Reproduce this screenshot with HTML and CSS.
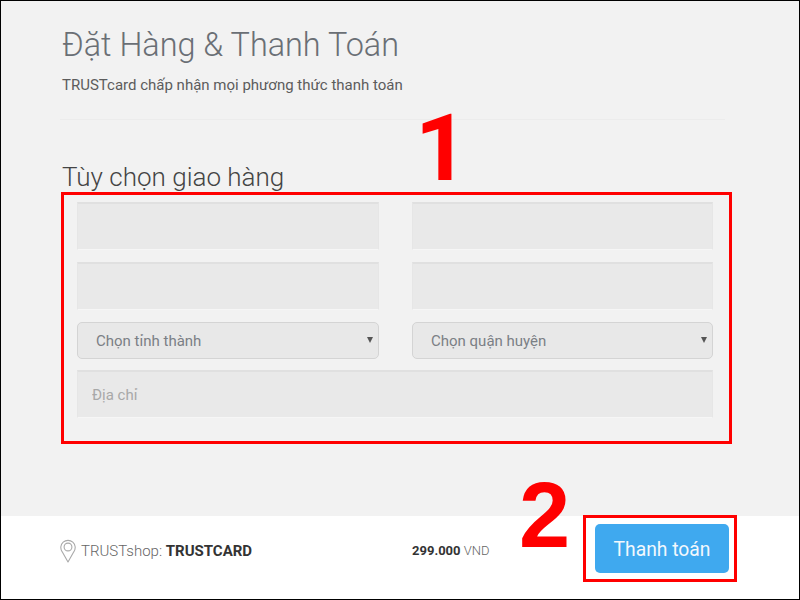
FILE: index.html
```html
<!DOCTYPE html>
<html lang="vi">
<head>
<meta charset="utf-8">
<title>Đặt Hàng &amp; Thanh Toán</title>
<link rel="stylesheet" href="styles.css">
</head>
<body>
<div class="page">
  <main class="main">
    <h1 class="title">Đặt Hàng &amp; Thanh Toán</h1>
    <p class="subtitle">TRUSTcard chấp nhận mọi phương thức thanh toán</p>
    <hr class="rule">
    <h2 class="section">Tùy chọn giao hàng</h2>
    <span class="mark mark-one">1</span>
    <form class="form">
      <input class="field" type="text" aria-label="Họ">
      <input class="field" type="text" aria-label="Tên">
      <input class="field" type="text" aria-label="Email">
      <input class="field" type="text" aria-label="Số điện thoại">
      <div class="select-wrap"><select class="select"><option>Chọn tỉnh thành</option></select></div>
      <div class="select-wrap"><select class="select"><option>Chọn quận huyện</option></select></div>
      <input class="field field-wide" type="text" placeholder="Địa chỉ">
    </form>
  </main>
  <footer class="footer">
    <div class="shop">
      <svg class="pin" viewBox="0 0 16 24" width="16" height="24" aria-hidden="true">
        <path d="M8 23 L2.2 12.8 A7.2 7.2 0 1 1 13.8 12.8 Z" fill="none" stroke="#a9a9a9" stroke-width="1.1" stroke-linejoin="round"/>
        <circle cx="8" cy="8" r="3.9" fill="none" stroke="#a9a9a9" stroke-width="1.1"/>
      </svg>
      <span class="shop-name">TRUSTshop: <b class="shop-brand">TRUSTCARD</b></span>
    </div>
    <div class="price"><b class="price-num">299.000</b> VND</div>
    <span class="mark mark-two">2</span>
    <div class="pay-frame"><button class="pay" type="button">Thanh toán</button></div>
  </footer>
</div>
</body>
</html>
```
FILE: styles.css
```css
* { box-sizing: border-box; }
html, body { margin: 0; padding: 0; }
body { font-family: Roboto, "Liberation Sans", sans-serif; }

.page {
  position: relative;
  width: 800px;
  height: 600px;
  border: 1px solid #000;
  display: flex;
  flex-direction: column;
  background: #fff;
  overflow: hidden;
}

.main {
  position: relative;
  height: 515px;
  flex: none;
  background: #f2f2f2;
  padding: 25px 0 0 61px;
}

.title {
  margin: 0;
  font-size: 32.4px;
  line-height: 38px;
  font-weight: 300;
  color: #6a6f75;
}
.subtitle {
  margin: 12px 0 0;
  font-size: 15px;
  line-height: 18px;
  font-weight: 400;
  color: #5c5c5c;
}
.rule {
  width: 665px;
  margin: 25px 0 0 -2px;
  border: 0;
  border-top: 1px solid #ececec;
}
.section {
  margin: 42px 0 0;
  font-size: 26px;
  line-height: 30px;
  font-weight: 300;
  color: #444;
}

.mark {
  position: absolute;
  font-family: "Liberation Sans", Arial, sans-serif;
  font-weight: 700;
  color: #f00;
  line-height: 1;
}
.mark-one { left: 414px; top: 101px; font-family: Roboto, sans-serif; font-size: 93px; font-weight: 700; }
.mark-two { left: 518px; top: -47px; font-size: 92px; }

.form {
  width: 671px;
  height: 252px;
  margin: 0 0 0 -1px;
  border: 3px solid #f00;
  padding: 7px 16px 0 13px;
  display: grid;
  grid-template-columns: 302px 301px;
  column-gap: 33px;
  grid-template-rows: 48px 48px 37px 48px;
  row-gap: 12px;
  align-content: start;
}
.field {
  display: block;
  width: 100%;
  height: 100%;
  margin: 0;
  border: 1px solid #e6e6e6;
  border-top: 2px solid #e0e0e0;
  border-bottom: 1px solid #f6f6f6;
  background: #e9e9e9;
  padding: 0 14px;
  font-family: inherit;
  font-size: 15px;
  color: #555;
  outline: none;
}
.field::placeholder { color: #a8a8a8; opacity: 1; }
.field-wide { grid-column: 1 / -1; height: 48px; margin-top: -1px; }

.select-wrap { position: relative; }
.select-wrap::after {
  content: "";
  position: absolute;
  right: 6px;
  top: 15px;
  border-left: 3px solid transparent;
  border-right: 3px solid transparent;
  border-top: 6px solid #555;
}
.select {
  display: block;
  width: 100%;
  height: 100%;
  margin: 0;
  appearance: none;
  border: 1px solid #d4d4d4;
  border-radius: 5px;
  background: #e8e8e8;
  padding: 0 18px;
  font-family: inherit;
  font-size: 15px;
  color: #7b7f85;
  outline: none;
}

.footer {
  position: relative;
  flex: 1;
  display: flex;
  align-items: center;
  padding: 0 0 14px 59px;
}
.shop {
  display: flex;
  align-items: center;
  gap: 5px;
  width: 352px;
  padding-top: 1px;
}
.pin { flex: none; }
.shop-name {
  font-size: 15px;
  font-weight: 300;
  color: #666;
}
.shop-brand { font-weight: 700; color: #333; }
.price {
  width: 171px;
  font-size: 13px;
  font-weight: 300;
  color: #666;
}
.price-num { font-weight: 700; color: #333; }
.pay-frame {
  width: 154px;
  height: 67px;
  margin-top: -1px;
  border: 3px solid #f00;
  padding: 6px 0 0 9px;
  align-self: flex-start;
}
.pay {
  display: block;
  width: 134px;
  height: 49px;
  border: 0;
  border-radius: 5px;
  background: #3fa9ef;
  color: #f2f8fd;
  padding: 1px 0 0;
  font-family: inherit;
  font-size: 19.3px;
  font-weight: 400;
}
```
